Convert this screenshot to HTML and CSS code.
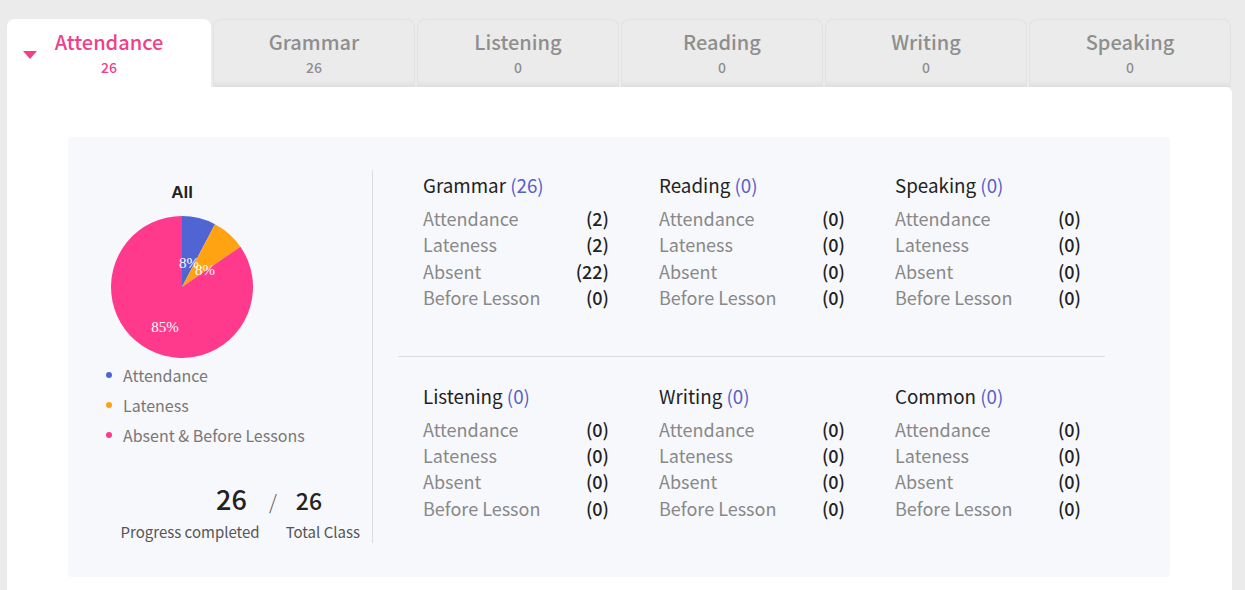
FILE: index.html
```html
<!DOCTYPE html>
<html>
<head>
<meta charset="utf-8">
<link rel="stylesheet" href="styles.css">
</head>
<body>
<div class="tabs">
  <div class="tab active"><span class="caret"></span><div class="tab-title">Attendance</div><div class="tab-num">26</div></div>
  <div class="tab"><div class="tab-title">Grammar</div><div class="tab-num">26</div></div>
  <div class="tab"><div class="tab-title">Listening</div><div class="tab-num">0</div></div>
  <div class="tab"><div class="tab-title">Reading</div><div class="tab-num">0</div></div>
  <div class="tab"><div class="tab-title">Writing</div><div class="tab-num">0</div></div>
  <div class="tab"><div class="tab-title">Speaking</div><div class="tab-num">0</div></div>
</div>
<div class="panel">
  <div class="box">
    <div class="left">
      <div class="all">All</div>
      <svg class="pie" viewBox="0 0 142 142" width="142" height="142">
        <path d="M71 71 L71 0 A71 71 0 0 1 103.99 8.13 Z" fill="#5064d4"/>
        <path d="M71 71 L103.99 8.13 A71 71 0 0 1 129.43 30.65 Z" fill="#ffa312"/>
        <path d="M71 71 L129.43 30.65 A71 71 0 1 1 71 0 Z" fill="#ff3a8c"/>
        <text x="78" y="52" class="pl">8%</text>
        <text x="94" y="59" class="pl">8%</text>
        <text x="54" y="116" class="pl">85%</text>
      </svg>
      <ul class="legend">
        <li><span class="dot blue"></span>Attendance</li>
        <li><span class="dot orange"></span>Lateness</li>
        <li><span class="dot pink"></span>Absent &amp; Before Lessons</li>
      </ul>
      <div class="stats">
        <div class="stat-nums"><span class="big">26</span><span class="slash">/</span><span class="small">26</span></div>
        <div class="stat-labels"><span>Progress completed</span><span>Total Class</span></div>
      </div>
    </div>
    <div class="right">
      <div class="grid">
        <div class="sec"><div class="sec-title">Grammar <span class="cnt">(26)</span></div>
          <div class="row"><span>Attendance</span><b>(2)</b></div>
          <div class="row"><span>Lateness</span><b>(2)</b></div>
          <div class="row"><span>Absent</span><b>(22)</b></div>
          <div class="row"><span>Before Lesson</span><b>(0)</b></div></div>
        <div class="sec"><div class="sec-title">Reading <span class="cnt">(0)</span></div>
          <div class="row"><span>Attendance</span><b>(0)</b></div>
          <div class="row"><span>Lateness</span><b>(0)</b></div>
          <div class="row"><span>Absent</span><b>(0)</b></div>
          <div class="row"><span>Before Lesson</span><b>(0)</b></div></div>
        <div class="sec"><div class="sec-title">Speaking <span class="cnt">(0)</span></div>
          <div class="row"><span>Attendance</span><b>(0)</b></div>
          <div class="row"><span>Lateness</span><b>(0)</b></div>
          <div class="row"><span>Absent</span><b>(0)</b></div>
          <div class="row"><span>Before Lesson</span><b>(0)</b></div></div>
      </div>
      <div class="hr"></div>
      <div class="grid second">
        <div class="sec"><div class="sec-title">Listening <span class="cnt">(0)</span></div>
          <div class="row"><span>Attendance</span><b>(0)</b></div>
          <div class="row"><span>Lateness</span><b>(0)</b></div>
          <div class="row"><span>Absent</span><b>(0)</b></div>
          <div class="row"><span>Before Lesson</span><b>(0)</b></div></div>
        <div class="sec"><div class="sec-title">Writing <span class="cnt">(0)</span></div>
          <div class="row"><span>Attendance</span><b>(0)</b></div>
          <div class="row"><span>Lateness</span><b>(0)</b></div>
          <div class="row"><span>Absent</span><b>(0)</b></div>
          <div class="row"><span>Before Lesson</span><b>(0)</b></div></div>
        <div class="sec"><div class="sec-title">Common <span class="cnt">(0)</span></div>
          <div class="row"><span>Attendance</span><b>(0)</b></div>
          <div class="row"><span>Lateness</span><b>(0)</b></div>
          <div class="row"><span>Absent</span><b>(0)</b></div>
          <div class="row"><span>Before Lesson</span><b>(0)</b></div></div>
      </div>
    </div>
  </div>
</div>
</body>
</html>
```
FILE: styles.css
```css
* { box-sizing: border-box; }
html, body { margin: 0; padding: 0; }
body {
  background: #ebebeb;
  font-family: "Noto Sans CJK KR", "Noto Sans", sans-serif;
  color: #222;
  overflow: hidden;
}
.tabs {
  display: flex;
  gap: 2px;
  padding: 19px 0 0 7px;
}
.tab {
  position: relative;
  width: 202px;
  height: 68px;
  background: #ebebeb;
  border: 1px solid #e2e2e2;
  border-bottom: none;
  border-radius: 8px 8px 0 0;
  box-shadow: inset 0 -7px 6px -5px rgba(0,0,0,0.07);
  text-align: center;
  color: #8e8e8e;
}
.tab.active {
  width: 204px;
  background: #fff;
  border-color: #fff;
  box-shadow: none;
  color: #f0408a;
}
.tab-title {
  font-size: 20px;
  line-height: 24px;
  margin-top: 10px;
  font-weight: 500;
}
.tab-num {
  font-size: 14px;
  line-height: 18px;
  margin-top: 4px;
  font-weight: 500;
}
.caret {
  position: absolute;
  left: 15px;
  top: 31px;
  width: 0;
  height: 0;
  border-left: 7px solid transparent;
  border-right: 7px solid transparent;
  border-top: 8px solid #f0408a;
}
.panel {
  margin-left: 7px;
  width: 1225px;
  background: #fff;
  border-radius: 0 6px 0 0;
  padding: 50px 62px 40px 61px;
}
.box {
  display: flex;
  background: #f7f8fc;
  border-radius: 4px;
  height: 440px;
  padding: 33px 0 34px;
}
.left {
  flex: none;
  width: 305px;
  border-right: 1px solid #dcdde2;
  padding-left: 43px;
}
.all {
  width: 142px;
  text-align: center;
  font-family: "Liberation Sans", sans-serif;
  font-weight: bold;
  font-size: 17px;
  line-height: 20px;
  margin-top: 13px;
  color: #222;
}
.pie {
  display: block;
  margin-top: 13px;
}
.pl {
  fill: #fff;
  font-family: "Liberation Serif", serif;
  font-size: 15px;
  text-anchor: middle;
}
.legend {
  list-style: none;
  margin: 2px 0 0 -5px;
  padding: 0;
}
.legend li {
  display: flex;
  align-items: center;
  font-size: 16px;
  line-height: 30px;
  color: #777;
}
.dot {
  width: 6px;
  height: 6px;
  border-radius: 50%;
  margin-right: 11px;
}
.dot.blue { background: #5064d4; }
.dot.orange { background: #ffa312; }
.dot.pink { background: #ff3a8c; }
.stats {
  margin-top: 33px;
  margin-left: -43px;
}
.stat-nums {
  display: flex;
  align-items: baseline;
  justify-content: flex-end;
  padding-right: 50px;
  height: 32px;
}
.big { font-size: 27px; line-height: 32px; font-weight: 500; color: #222; }
.slash { font-size: 20px; color: #555; margin: 0 19px 0 22px; font-weight: 300; }
.small { font-size: 23px; line-height: 32px; color: #222; font-weight: 500; }
.stat-labels {
  display: flex;
  justify-content: flex-end;
  gap: 26px;
  padding-right: 12px;
  font-size: 15px;
  line-height: 20px;
  color: #555;
  margin-top: 7px;
}
.right {
  flex: 1;
  min-width: 0;
  padding: 2px 65px 0 25px;
}
.grid {
  display: grid;
  grid-template-columns: 236px 236px 186px;
  padding-left: 25px;
}
.sec { width: 186px; }
.sec-title {
  font-size: 18.8px;
  line-height: 26px;
  color: #222;
  margin-bottom: 7px;
}
.cnt { color: #5a5fc8; }
.row {
  display: flex;
  justify-content: space-between;
  font-size: 18px;
  line-height: 26.4px;
}
.row span { color: #888; }
.row b { font-weight: 500; color: #222; }
.hr {
  height: 1px;
  background: #dcdde2;
  margin: 45px 0 26px;
}
.second .row { line-height: 26.3px; }
```
